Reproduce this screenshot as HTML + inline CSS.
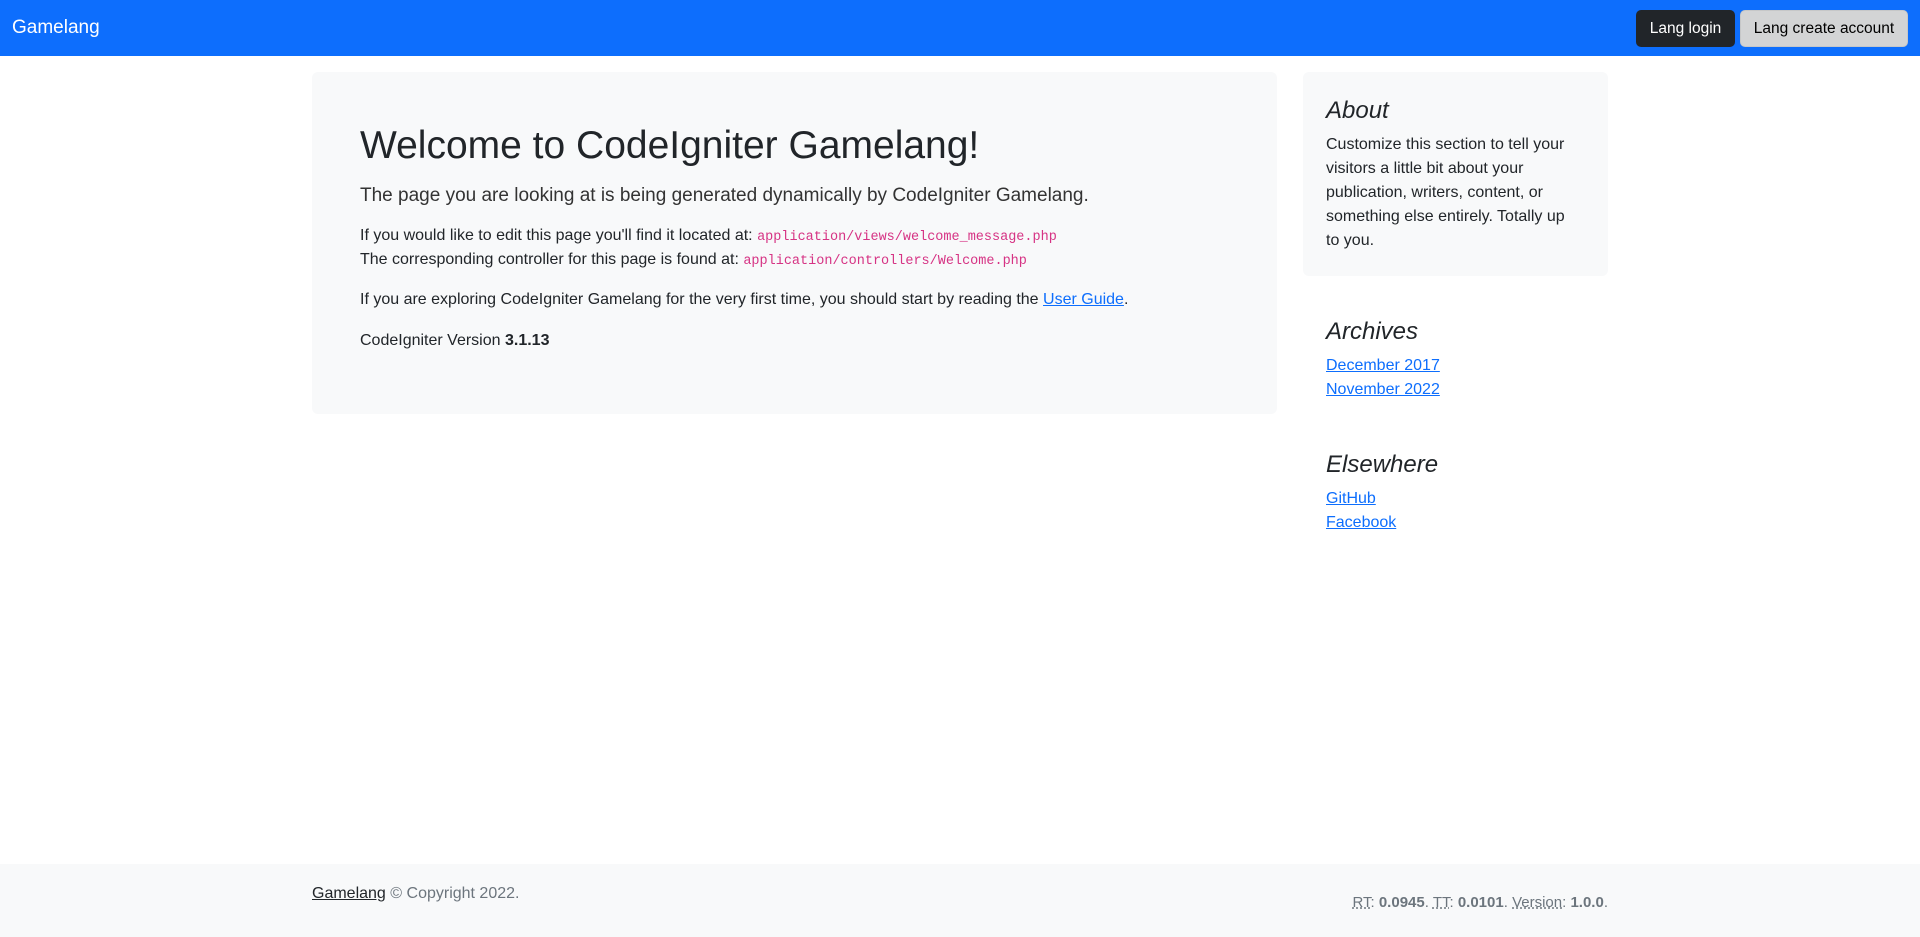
<!DOCTYPE html>
<html><head><meta charset="utf-8"><style>
*{box-sizing:border-box;margin:0;padding:0}
body{width:1920px;height:937px;position:relative;font-family:"Liberation Sans",sans-serif;color:#212529;background:#fff;font-size:16px;line-height:24px;overflow:hidden}
.nav{position:absolute;left:0;top:0;width:1920px;height:56px;background:#0d6efd}
.brand{position:absolute;left:12px;top:14px;color:#fff;font-size:19px;line-height:28px}
.btn{position:absolute;top:10px;height:37px;border-radius:5px;font-size:15.5px;line-height:38px;text-align:center}
.b1{left:1636px;width:99px;background:#212529;color:#fff}
.b2{left:1740px;width:168px;background:#d3d4d5;color:#000;border:1px solid #c6c7c8;line-height:36px}
.card{position:absolute;left:312px;top:72px;width:965px;height:342px;background:#f8f9fa;border-radius:6px}
h1{position:absolute;left:48px;top:50px;font-size:39px;font-weight:400;line-height:48px;white-space:nowrap}
.lead{position:absolute;left:48px;top:110px;font-size:19px;font-weight:300;color:#333;white-space:nowrap;line-height:28px}
.p{position:absolute;left:48px;white-space:nowrap}
code{font-family:"Liberation Mono",monospace;font-size:13.5px;color:#d63384;line-height:16px}
a{color:#0d6efd;text-decoration:underline}
.side{position:absolute;left:1303px;top:72px;width:305px;height:204px;background:#f8f9fa;border-radius:6px;padding:23px 36px 0 23px}
h4{font-style:italic;font-weight:400;font-size:24px;line-height:32px;margin-bottom:6px}
.sec{position:absolute;left:1326px}
.foot{position:absolute;left:0;top:864px;width:1920px;height:73px;background:#f8f9fa;color:#6c757d}
.fl{position:absolute;left:312px;top:18px;font-size:16px}
.fl a{color:#212529}
.fr{position:absolute;right:312px;top:27px;font-size:15px}
.fr abbr{text-decoration:underline dotted}
</style></head><body>
<div class="nav"><div class="brand">Gamelang</div>
<div class="btn b1">Lang login</div><div class="btn b2">Lang create account</div></div>
<div class="card">
<h1>Welcome to CodeIgniter Gamelang!</h1>
<div class="lead">The page you are looking at is being generated dynamically by CodeIgniter Gamelang.</div>
<div class="p" style="top:152px">If you would like to edit this page you'll find it located at: <code>application/views/welcome_message.php</code><br>The corresponding controller for this page is found at: <code>application/controllers/Welcome.php</code></div>
<div class="p" style="top:216px">If you are exploring CodeIgniter Gamelang for the very first time, you should start by reading the <a>User Guide</a>.</div>
<div class="p" style="top:257px">CodeIgniter Version <b>3.1.13</b></div>
</div>
<div class="side"><h4>About</h4><div>Customize this section to tell your visitors a little bit about your publication, writers, content, or something else entirely. Totally up to you.</div></div>
<div class="sec" style="top:316px"><h4>Archives</h4><a>December 2017</a><br><a>November 2022</a></div>
<div class="sec" style="top:449px"><h4>Elsewhere</h4><a>GitHub</a><br><a>Facebook</a></div>
<div class="foot"><div class="fl"><a>Gamelang</a> © Copyright 2022.</div>
<div class="fr"><abbr>RT</abbr>: <b>0.0945</b>. <abbr>TT</abbr>: <b>0.0101</b>. <abbr>Version</abbr>: <b>1.0.0</b>.</div></div>
</body></html>
